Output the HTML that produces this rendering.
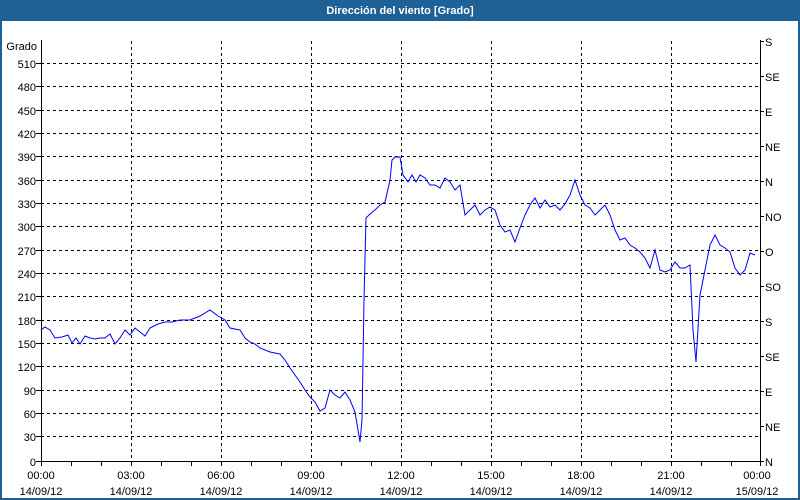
<!DOCTYPE html>
<html><head><meta charset="utf-8"><style>
html,body{margin:0;padding:0;background:#fff;}
svg{display:block;font-family:"Liberation Sans","DejaVu Sans",sans-serif;}
</style></head><body>
<svg width="800" height="500" viewBox="0 0 800 500" xmlns="http://www.w3.org/2000/svg">
<rect x="0" y="0" width="800" height="500" fill="#fff"/>
<rect x="0" y="0" width="800" height="21" fill="#1e6197"/>
<rect x="0" y="0" width="2" height="500" fill="#1e6197"/>
<rect x="798" y="0" width="2" height="500" fill="#1e6197"/>
<rect x="0" y="498" width="800" height="2" fill="#1e6197"/>
<text x="400" y="14" fill="#fff" font-size="11" font-weight="bold" text-anchor="middle">Dirección del viento [Grado]</text>
<g stroke="#000" stroke-width="1" stroke-dasharray="3,3" fill="none" shape-rendering="crispEdges">
<path d="M41 63.5H760M41 86.5H760M41 110.5H760M41 133.5H760M41 156.5H760M41 180.5H760M41 203.5H760M41 226.5H760M41 250.5H760M41 273.5H760M41 296.5H760M41 320.5H760M41 343.5H760M41 366.5H760M41 390.5H760M41 413.5H760M41 436.5H760"/>
<path d="M131.5 41V461M221.5 41V461M311.5 41V461M401.5 41V461M491.5 41V461M581.5 41V461M671.5 41V461"/>
</g>
<g stroke="#000" fill="none" shape-rendering="crispEdges">
<path d="M41.5 40V461.5H760.5V40"/>
<path d="M71.5 461v5M101.5 461v5M131.5 461v5M161.5 461v5M191.5 461v5M221.5 461v5M251.5 461v5M281.5 461v5M311.5 461v5M341.5 461v5M371.5 461v5M401.5 461v5M431.5 461v5M461.5 461v5M491.5 461v5M521.5 461v5M551.5 461v5M581.5 461v5M611.5 461v5M641.5 461v5M671.5 461v5M701.5 461v5M731.5 461v5M41.5 461v5M760.5 461v5"/>
<path d="M36 63.5h5M36 86.5h5M36 110.5h5M36 133.5h5M36 156.5h5M36 180.5h5M36 203.5h5M36 226.5h5M36 250.5h5M36 273.5h5M36 296.5h5M36 320.5h5M36 343.5h5M36 366.5h5M36 390.5h5M36 413.5h5M36 436.5h5M36 461.5h5"/>
<path d="M760 41.5h4M760 76.5h4M760 111.5h4M760 146.5h4M760 181.5h4M760 216.5h4M760 251.5h4M760 286.5h4M760 321.5h4M760 356.5h4M760 391.5h4M760 426.5h4M760 461.5h4"/>
</g>
<g font-size="11" fill="#000" text-anchor="end">
<text x="37" y="50">Grado</text>
<text x="36" y="68">510</text><text x="36" y="91">480</text><text x="36" y="115">450</text><text x="36" y="138">420</text><text x="36" y="161">390</text><text x="36" y="185">360</text><text x="36" y="208">330</text><text x="36" y="231">300</text><text x="36" y="255">270</text><text x="36" y="278">240</text><text x="36" y="301">210</text><text x="36" y="325">180</text><text x="36" y="348">150</text><text x="36" y="371">120</text><text x="36" y="395">90</text><text x="36" y="418">60</text><text x="36" y="441">30</text><text x="36" y="466">0</text>
</g>
<g font-size="11" fill="#000">
<text x="765" y="46">S</text><text x="765" y="81">SE</text><text x="765" y="116">E</text><text x="765" y="151">NE</text><text x="765" y="186">N</text><text x="765" y="221">NO</text><text x="765" y="256">O</text><text x="765" y="291">SO</text><text x="765" y="326">S</text><text x="765" y="361">SE</text><text x="765" y="396">E</text><text x="765" y="431">NE</text><text x="765" y="466">N</text>
</g>
<g font-size="11" fill="#000" text-anchor="middle">
<text x="41" y="479">00:00</text><text x="41" y="495">14/09/12</text>
<text x="131" y="479">03:00</text><text x="131" y="495">14/09/12</text>
<text x="221" y="479">06:00</text><text x="221" y="495">14/09/12</text>
<text x="311" y="479">09:00</text><text x="311" y="495">14/09/12</text>
<text x="401" y="479">12:00</text><text x="401" y="495">14/09/12</text>
<text x="491" y="479">15:00</text><text x="491" y="495">14/09/12</text>
<text x="581" y="479">18:00</text><text x="581" y="495">14/09/12</text>
<text x="671" y="479">21:00</text><text x="671" y="495">14/09/12</text>
<text x="757" y="479">00:00</text><text x="757" y="495">15/09/12</text>
</g>
<polyline fill="none" stroke="#0000ff" stroke-width="1" points="41,330 45,327 50,330 55,338 62,337 68,335 72,343 76,338 80,344 85,336 90,338 95,339 100,338 105,338 110,334 115,344 120,338 125,330 130,335 135,328 140,332 145,336 150,328 158,324 165,322 172,322 180,320 190,320 200,316 210,310 218,316 225,320 230,328 240,330 245,338 250,342 255,344 260,348 270,352 280,354 285,360 290,368 295,375 300,382 305,390 310,397 315,402 320,411 325,408 330,390 335,395 340,398 345,392 350,400 355,412 360,442 362,420 364,300 366,218 370,214 375,210 380,205 385,202 390,180 392,160 395,157 400,157 403,175 408,182 412,175 416,182 420,175 425,178 430,185 435,185 440,188 445,178 450,182 455,190 460,185 465,215 470,210 475,205 480,215 485,210 490,207 495,210 500,225 505,232 510,230 515,242 520,228 525,215 530,205 535,198 540,208 545,200 550,207 555,205 560,210 565,204 570,195 575,180 580,195 585,205 590,208 595,215 600,210 605,205 610,215 615,230 620,240 625,238 630,245 635,248 640,252 645,258 650,268 655,250 660,270 665,272 670,270 675,262 680,268 685,268 690,265 693,330 696,362 700,295 705,270 710,245 715,235 720,245 725,248 730,252 735,268 740,275 745,270 750,253 755,255"/>
</svg>
</body></html>
